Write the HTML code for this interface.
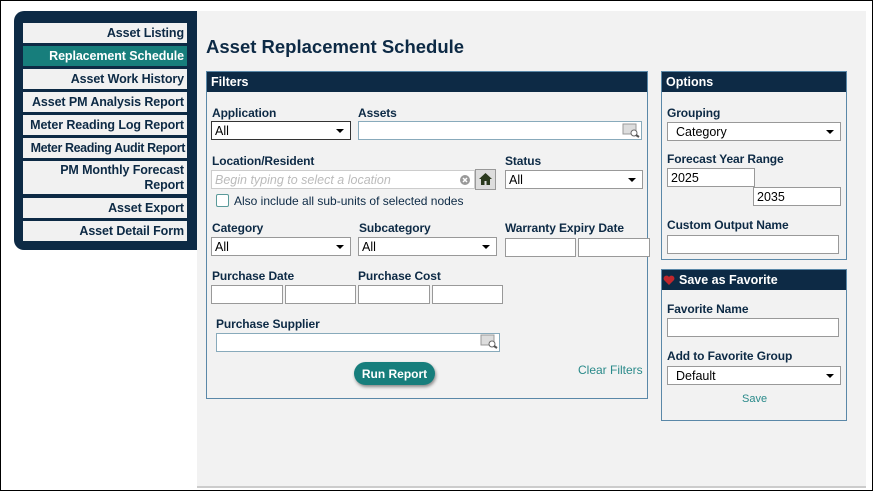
<!DOCTYPE html>
<html><head><style>
*{box-sizing:border-box;margin:0;padding:0}
body{width:873px;height:491px;background:#fff;font-family:"Liberation Sans",Arial,sans-serif;position:relative;overflow:hidden}
.a{position:absolute}
.frame{left:0;top:0;width:873px;height:491px;border:1px solid #000;z-index:10}
.nav{left:14px;top:11px;width:183px;height:239px;background:#0d2a45;border-radius:10px 0 0 10px}
.ni{position:absolute;left:23px;width:164px;background:#f1f1f1;color:#0d2a45;font-weight:bold;font-size:12.5px;letter-spacing:-0.1px;text-align:right;padding-right:3px;line-height:20px;white-space:nowrap}
.ni.sel{background:#177e7c;color:#fff}
.main{left:197px;top:11px;width:669px;height:477px;background:#f2f2f2;border-bottom:2px solid #ccc}
h1{position:absolute;left:206px;top:36px;font-size:18.5px;color:#0d2a45;font-weight:bold}
.panel{position:absolute;border:1px solid #5a88a8;background:#f2f2f2}
.ph{background:#0d2a45;color:#fff;font-weight:bold;font-size:12.5px;height:20px;line-height:21px;padding-left:4px}
.lb{position:absolute;font-size:12px;font-weight:bold;color:#0d2a45;letter-spacing:-0.1px}
.in{position:absolute;background:#fff;border:1px solid #999;height:19px;font-size:12.5px;line-height:18px;padding-left:3px;color:#000}
.sel2:after{content:"";position:absolute;right:6px;top:7px;border-left:4px solid transparent;border-right:4px solid transparent;border-top:4px solid #000}
.lk{position:absolute;color:#2a8a8a;font-size:12px}
</style></head><body>
<div class="a main"></div>
<div class="a nav"></div>
<div class="ni" style="top:23px">Asset Listing</div>
<div class="ni sel" style="top:46px">Replacement Schedule</div>
<div class="ni" style="top:69px">Asset Work History</div>
<div class="ni" style="top:92px">Asset PM Analysis Report</div>
<div class="ni" style="top:115px">Meter Reading Log Report</div>
<div class="ni" style="top:138px;letter-spacing:-0.4px;padding-right:2px">Meter Reading Audit Report</div>
<div class="ni" style="top:161px;height:33px;line-height:15px;padding-top:2px">PM Monthly Forecast<br>Report</div>
<div class="ni" style="top:198px">Asset Export</div>
<div class="ni" style="top:221px">Asset Detail Form</div>
<h1>Asset Replacement Schedule</h1>

<div class="panel" style="left:206px;top:71px;width:442px;height:328px"><div class="ph">Filters</div></div>
<div class="lb" style="left:212px;top:106px">Application</div>
<div class="in sel2" style="left:211px;top:121px;width:140px;border:1px solid #333">All</div>
<div class="lb" style="left:358px;top:106px">Assets</div>
<div class="in" style="left:358px;top:121px;width:284px;border-color:#8ab"></div>
<svg class="a" style="left:622px;top:123px" width="18" height="15"><rect x="1" y="1" width="13" height="10" fill="#ddd" stroke="#999"/><circle cx="12" cy="10" r="3" fill="#fff" stroke="#666"/><line x1="14" y1="12" x2="17" y2="14" stroke="#555" stroke-width="2"/></svg>
<div class="lb" style="left:212px;top:154px">Location/Resident</div>
<div class="in" style="left:211px;top:170px;width:264px;border-color:#ccc;color:#bbb;font-style:italic">Begin typing to select a location</div>
<svg class="a" style="left:459px;top:174px" width="12" height="12"><circle cx="6" cy="6" r="5" fill="#999"/><path d="M4 4L8 8M8 4L4 8" stroke="#fff" stroke-width="1.5"/></svg>
<div class="a" style="left:475px;top:169px;width:21px;height:21px;background:#ddd;border:1px solid #999"></div>
<svg class="a" style="left:478px;top:172px" width="15" height="14"><path d="M7.5 1L1 7h2v6h3.5v-4h2v4H12V7h2z" fill="#2b3a1e"/></svg>
<div class="lb" style="left:505px;top:154px">Status</div>
<div class="in sel2" style="left:505px;top:170px;width:138px">All</div>
<div class="a" style="left:216px;top:194px;width:13px;height:13px;border:1px solid #5a9a9a;background:#fff;border-radius:2px"></div>
<div class="a" style="left:234px;top:194px;font-size:12px;color:#0d2a45">Also include all sub-units of selected nodes</div>
<div class="lb" style="left:212px;top:221px">Category</div>
<div class="in sel2" style="left:211px;top:237px;width:140px">All</div>
<div class="lb" style="left:359px;top:221px">Subcategory</div>
<div class="in sel2" style="left:358px;top:237px;width:139px">All</div>
<div class="lb" style="left:505px;top:221px">Warranty Expiry Date</div>
<div class="in" style="left:505px;top:238px;width:71px"></div>
<div class="in" style="left:578px;top:238px;width:72px"></div>
<div class="lb" style="left:212px;top:269px">Purchase Date</div>
<div class="lb" style="left:358px;top:269px">Purchase Cost</div>
<div class="in" style="left:211px;top:285px;width:72px"></div>
<div class="in" style="left:285px;top:285px;width:71px"></div>
<div class="in" style="left:358px;top:285px;width:72px"></div>
<div class="in" style="left:432px;top:285px;width:71px"></div>
<div class="lb" style="left:216px;top:317px">Purchase Supplier</div>
<div class="in" style="left:216px;top:333px;width:284px;border-color:#8ab"></div>
<svg class="a" style="left:480px;top:334px" width="18" height="15"><rect x="1" y="1" width="13" height="10" fill="#ddd" stroke="#999"/><circle cx="12" cy="10" r="3" fill="#fff" stroke="#666"/><line x1="14" y1="12" x2="17" y2="14" stroke="#555" stroke-width="2"/></svg>
<div class="a" style="left:354px;top:362px;width:81px;height:23px;border-radius:12px;background:#177e7c;color:#fff;font-weight:bold;font-size:12px;text-align:center;line-height:24px;box-shadow:1px 2px 3px #888">Run Report</div>
<div class="lk" style="left:578px;top:363px">Clear Filters</div>

<div class="panel" style="left:661px;top:71px;width:186px;height:189px"><div class="ph">Options</div></div>
<div class="lb" style="left:667px;top:106px">Grouping</div>
<div class="in sel2" style="left:667px;top:122px;width:174px;padding-left:8px">Category</div>
<div class="lb" style="left:667px;top:152px">Forecast Year Range</div>
<div class="in" style="left:667px;top:168px;width:88px">2025</div>
<div class="in" style="left:753px;top:187px;width:88px">2035</div>
<div class="lb" style="left:667px;top:218px">Custom Output Name</div>
<div class="in" style="left:667px;top:235px;width:172px"></div>

<div class="panel" style="left:661px;top:269px;width:186px;height:152px"><div class="ph" style="padding-left:17px">Save as Favorite</div></div>
<svg class="a" style="left:663px;top:275px" width="12" height="11"><path d="M6 10L1 5A2.7 2.7 0 0 1 6 2A2.7 2.7 0 0 1 11 5z" fill="#c0272d"/></svg>
<div class="lb" style="left:667px;top:302px">Favorite Name</div>
<div class="in" style="left:667px;top:318px;width:172px"></div>
<div class="lb" style="left:667px;top:349px">Add to Favorite Group</div>
<div class="in sel2" style="left:667px;top:366px;width:174px;padding-left:8px">Default</div>
<div class="lk" style="left:742px;top:393px;font-size:11px">Save</div>
<div class="a frame"></div>
</body></html>
